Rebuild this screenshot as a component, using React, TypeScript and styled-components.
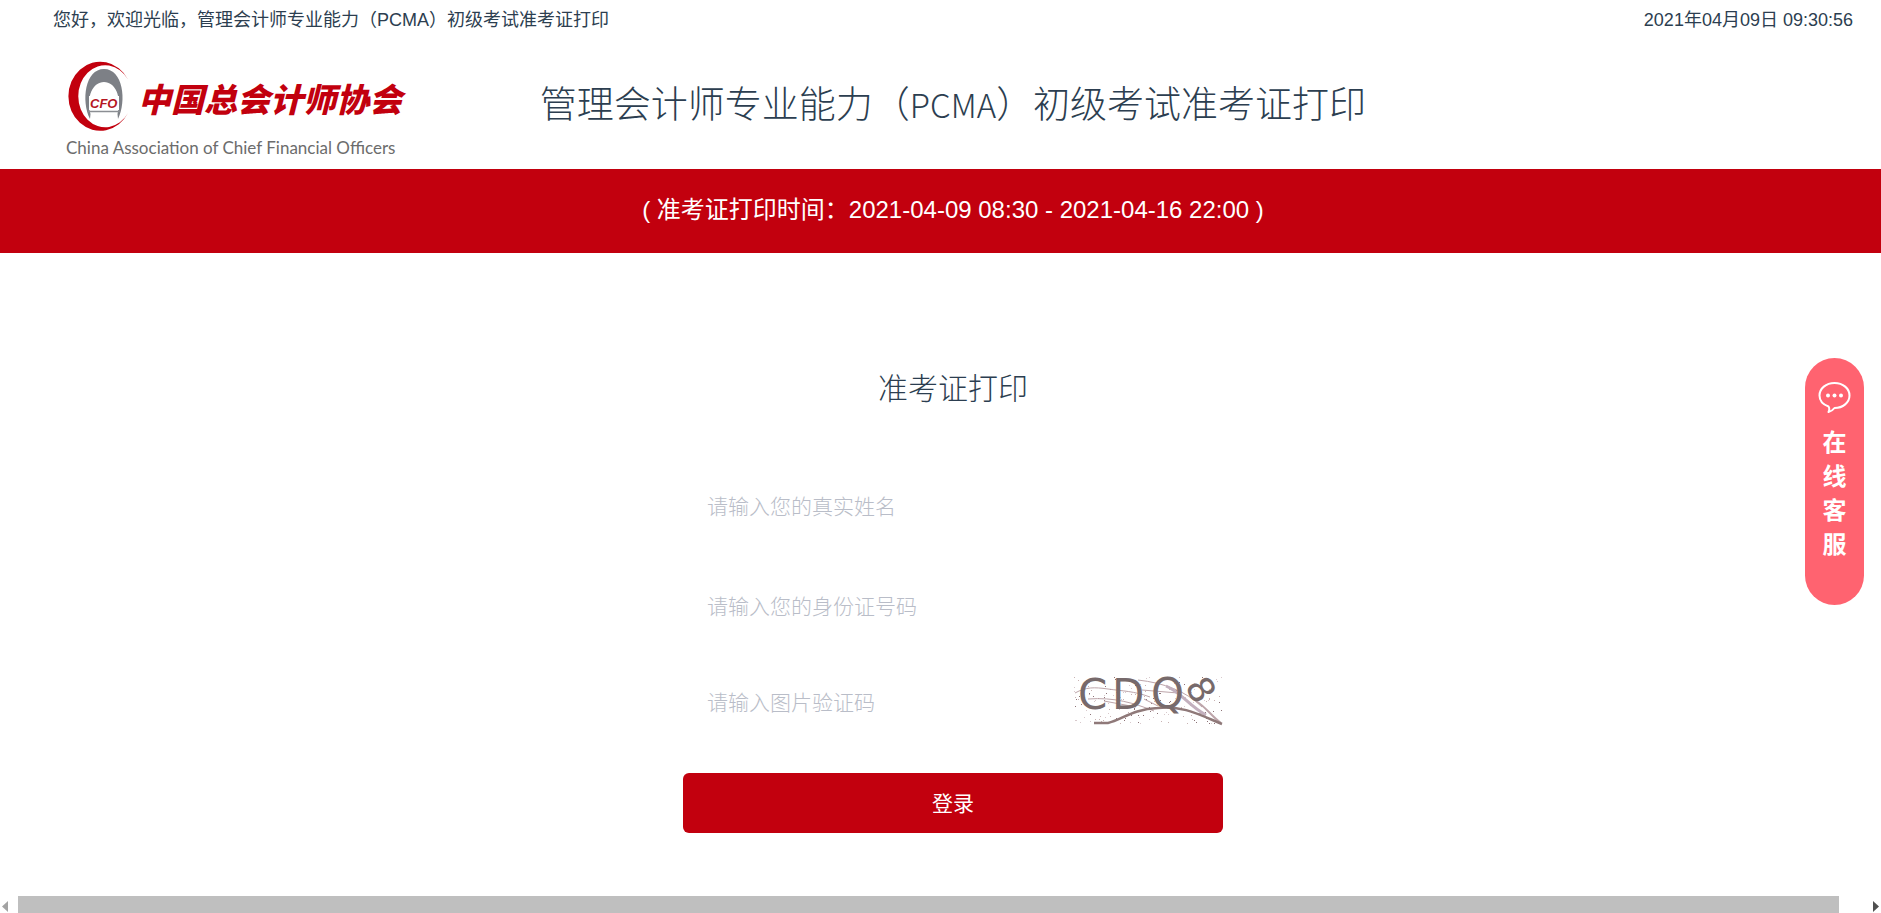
import React from 'react';
import styled, { createGlobalStyle } from 'styled-components';

const red = '#c2000e';
const ink = '#2c3e50';

const GlobalStyle = createGlobalStyle`
  * { box-sizing: border-box; }
  body {
    margin: 0;
    background: #fff;
    color: ${ink};
    font-family: "Liberation Sans", "Noto Sans CJK SC", sans-serif;
  }
  button, input { font: inherit; }
`;

const Page = styled.div`
  min-height: 100vh;
  display: flex;
  flex-direction: column;
  overflow: hidden;
`;

/* The content is a little wider than the window, which the scroll bar shows. */
const Content = styled.div`
  flex: 1;
  width: calc(100% + 25px);
`;

const TopBar = styled.div`
  display: flex;
  justify-content: space-between;
  height: 40px;
  padding: 0 53px;
  font-size: 18px;
  line-height: 40px;
`;

const Header = styled.header`
  display: grid;
  grid-template-columns: 1fr auto 1fr;
  height: 129px;
`;

const Logo = styled.a`
  justify-self: start;
  padding: 21px 0 0 66px;
  color: ${red};
  text-decoration: none;
`;

const LogoRow = styled.div`
  display: flex;
  align-items: center;
  gap: 6px;
  height: 72px;
`;

const LogoName = styled.span`
  padding-top: 8px;
  font-size: 33px;
  line-height: 40px;
  font-weight: 900;
  font-style: italic;
`;

const LogoTagline = styled.div`
  color: #6c6c6c;
  font-family: Lato, sans-serif;
  font-size: 17px;
  line-height: 30px;
  white-space: nowrap;
`;

const Title = styled.h1`
  margin: 0;
  padding-top: 34px;
  font-size: 37px;
  line-height: 56px;
  font-weight: 300;
  font-family: "Noto Sans CJK SC", sans-serif;
  white-space: nowrap;
`;

const Latin = styled.span`
  font-size: 33px;
`;

const Banner = styled.div`
  height: 84px;
  background: ${red};
  color: #fff;
  font-size: 24px;
  line-height: 82px;
  text-align: center;
`;

const Form = styled.form`
  display: flex;
  flex-direction: column;
  gap: 40px;
  width: 540px;
  margin: 0 auto;
  padding: 116px 0 63px;
`;

const FormTitle = styled.h2`
  margin: 0 0 28px;
  font-size: 30px;
  line-height: 40px;
  font-weight: 300;
  text-align: center;
`;

const Field = styled.input`
  flex: 1;
  min-width: 0;
  min-height: 60px;
  padding: 0 24px;
  border: 0;
  outline: 0;
  background: transparent;
  color: ${ink};
  font-size: 21px;
  font-weight: 300;
  &::placeholder { color: #b9bdc8; opacity: 1; }
`;

const CodeRow = styled.div`
  display: flex;
  align-items: flex-start;
  height: 56px;
  ${Field} { min-height: 52px; }
`;

const CaptchaButton = styled.button`
  padding: 0;
  border: 0;
  background: none;
  cursor: pointer;
  svg { display: block; overflow: visible; }
`;

const Submit = styled.button`
  height: 60px;
  padding: 0 0 2px;
  border: 0;
  border-radius: 6px;
  background: ${red};
  color: #fff;
  font-size: 21px;
  cursor: pointer;
`;

const Service = styled.button`
  position: fixed;
  top: 358px;
  right: 17px;
  display: flex;
  flex-direction: column;
  align-items: center;
  gap: 13px;
  width: 59px;
  padding: 23px 17px 43px;
  border: 0;
  border-radius: 30px;
  background: #ff6370;
  color: #fff;
  font-size: 24px;
  line-height: 34px;
  font-weight: 700;
  cursor: pointer;
  svg { flex: none; }
`;

const ScrollBar = styled.div`
  display: flex;
  align-items: center;
  justify-content: space-between;
  height: 17px;
  padding: 0 2px;
  svg { margin-top: 3px; }
`;

const Thumb = styled.div`
  flex: 1;
  height: 17px;
  margin: 0 34px 0 10px;
  background: #bfbfbf;
`;

const Emblem = () => (
  <svg width="66" height="72" viewBox="0 0 66 72" aria-hidden="true">
    <path fill={red} d="M62 18.500A31.800 34.500 0 1 0 62 52A27 31 0 1 1 62 18.500Z" />
    <path
      fill="#7d8086"
      d="M24 58C15 40 19 8 38 8C57 8 61 40 52 58L51.500 53C56 35 49 21 38 21C27 21 20 35 24.500 53Z"
    />
    <path stroke="#8b8e93" strokeWidth="1.500" d="M22 50.500H54" />
    <rect x="23" y="35" width="30" height="14" fill="#fff" />
    <text
      x="24"
      y="47"
      fontFamily="Liberation Sans, sans-serif"
      fontSize="13"
      fontWeight="700"
      fontStyle="italic"
      fill="#b5161f"
    >
      CFO
    </text>
  </svg>
);

const specks = Array.from({ length: 170 }, (_, i) => ({
  x: (i * 53 + ((i * i * 7) % 31)) % 148,
  y: (i * 29 + ((i * i * 3) % 17)) % 47,
  tone: ['#c9b3b3', '#8d7377', '#d8c9cc'][i % 3],
}));

const Captcha = () => (
  <svg width="149" height="48" viewBox="0 0 149 48" role="img" aria-label="图片验证码">
    {specks.map((s, i) => (
      <rect key={i} x={s.x} y={s.y} width="1" height="1" fill={s.tone} />
    ))}
    <g fill="none" stroke="#bda5aa">
      <path d="M1 16C12 10 20 10 34 12S60 14 76 20" />
      <path d="M14 22C40 20 60 26 80 34" />
      <path d="M64 3C90 6 112 14 128 30" />
      <path d="M68 13L104 16M70 22L84 29M30 24L62 30" />
      <path stroke="#c3b0be" strokeWidth="3" d="M92 9C108 16 114 28 132 38" />
      <path strokeWidth="2" d="M122 24C132 30 138 40 147 46" />
    </g>
    <path
      fill="none"
      stroke="#8f7979"
      strokeWidth="2.500"
      d="M20 46H34C48 43 58 32 84 31C108 28 126 38 148 47"
    />
    <g fontFamily="DejaVu Sans, sans-serif" fontSize="42" fill="#776a6b">
      <text x="4" y="32">C</text>
      <text x="38" y="32">D</text>
      <text x="77" y="31">Q</text>
      <text x="-11" y="13" fontSize="36" transform="translate(127 12) rotate(60)">8</text>
    </g>
  </svg>
);

const Bubble = () => (
  <svg width="33" height="32" viewBox="0 0 33 32" fill="none" aria-hidden="true">
    <path
      stroke="#fff"
      strokeWidth="2"
      strokeLinejoin="round"
      d="M10.500 25.500C5 23.500 1.500 19.500 1.500 14.500C1.500 7.500 8 2 16.500 2S31.500 7.500 31.500 14.500S25 27 16.500 27C15 29 13 30.500 10.500 31C11.500 29 11.500 27 10.500 25.500Z"
    />
    <g fill="#fff">
      <circle cx="10" cy="14.500" r="2" />
      <circle cx="16.500" cy="14.500" r="2" />
      <circle cx="23" cy="14.500" r="2" />
    </g>
  </svg>
);

export default function App() {
  return (
    <>
      <GlobalStyle />
      <Page>
        <Content>
          <TopBar>
            <span>您好，欢迎光临，管理会计师专业能力（PCMA）初级考试准考证打印</span>
            <time dateTime="2021-04-09T09:30:56">2021年04月09日 09:30:56</time>
          </TopBar>
          <Header>
            <Logo href="#">
              <LogoRow>
                <Emblem />
                <LogoName>中国总会计师协会</LogoName>
              </LogoRow>
              <LogoTagline>China Association of Chief Financial Officers</LogoTagline>
            </Logo>
            <Title>
              管理会计师专业能力（<Latin>PCMA</Latin>）初级考试准考证打印
            </Title>
          </Header>
          <Banner>( 准考证打印时间：2021-04-09 08:30 - 2021-04-16 22:00 )</Banner>
          <Form onSubmit={(e) => e.preventDefault()}>
            <FormTitle>准考证打印</FormTitle>
            <Field type="text" aria-label="真实姓名" placeholder="请输入您的真实姓名" />
            <Field type="text" aria-label="身份证号码" placeholder="请输入您的身份证号码" />
            <CodeRow>
              <Field type="text" aria-label="图片验证码" placeholder="请输入图片验证码" />
              <CaptchaButton type="button" aria-label="刷新验证码">
                <Captcha />
              </CaptchaButton>
            </CodeRow>
            <Submit type="submit">登录</Submit>
          </Form>
        </Content>
        <ScrollBar aria-hidden="true">
          <svg width="6" height="11" viewBox="0 0 6 11">
            <path fill="#a3a3a3" d="M6 0V11L0 5.500Z" />
          </svg>
          <Thumb />
          <svg width="6" height="11" viewBox="0 0 6 11">
            <path fill="#505050" d="M0 0V11L6 5.500Z" />
          </svg>
        </ScrollBar>
      </Page>
      <Service type="button">
        <Bubble />
        <span>在线客服</span>
      </Service>
    </>
  );
}
